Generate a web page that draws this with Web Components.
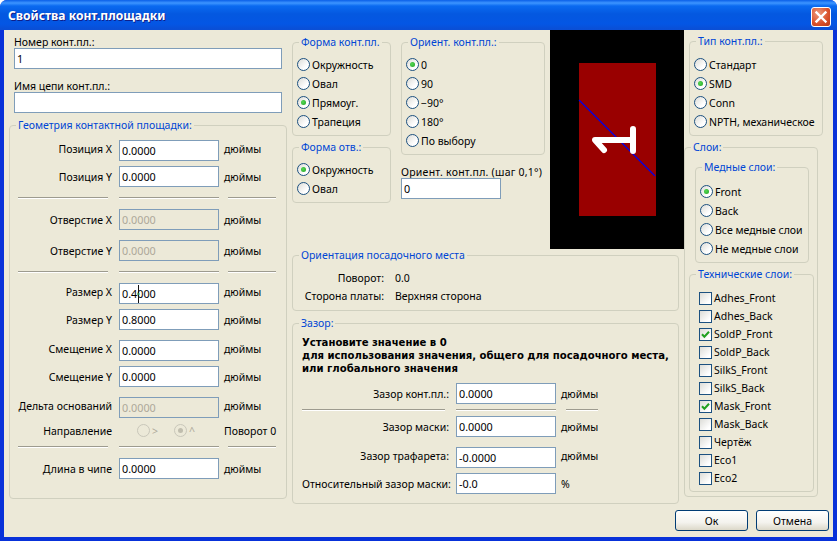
<!DOCTYPE html>
<html>
  <head>
    <title>Свойства конт.площадки</title>
    <style>
      html, body { margin: 0; padding: 0; background: #fff; }
    </style>
    <script>
      class WindowElement extends HTMLElement {
        static registerCustomElement() {
          WindowElement.template = document.createElement('template');
          WindowElement.template.innerHTML = `
            <style>
              :host {
                display: flex;
                flex-direction: column;
                width: 837px;
                height: 541px;
                box-sizing: border-box;
                font: 10.5px "Noto Sans", sans-serif;
                color: #000;
                background: #0831d9;
                border-radius: 7px 7px 0 0;
                overflow: hidden;
              }
              .bar {
                display: flex;
                align-items: center;
                justify-content: space-between;
                height: 30px;
                flex: none;
                padding: 0 6px 0 8px;
                box-sizing: border-box;
                background: linear-gradient(#0a5fe8 0, #3d95ff 3px, #0a6af0 6px, #0458e0 14px, #0456e4 24px, #0a4fd6 29px);
                color: #fff;
                font: bold 12.1px "Noto Sans", sans-serif;
                text-shadow: 1px 1px 0 #0f1f8a;
              }
              .close {
                width: 20px;
                height: 20px;
                margin-top: 4px;
                box-sizing: border-box;
                border: 1px solid #fff;
                border-radius: 3px;
                background: radial-gradient(circle at 35% 30%, #ec9a7c, #d9502a 60%, #b83a14);
              }
              .close svg { display: block; }
              .client {
                flex: 1;
                margin: 0 4px 4px;
                background: #ece9d8;
                min-height: 0;
              }
            </style>
            <div class="bar">
              <span class="title"></span>
              <div class="close">
                <svg width="18" height="18" viewBox="0 0 18 18"><path d="M4.5 4.5L13.5 13.5M13.5 4.5L4.5 13.5" stroke="#fff" stroke-width="2.4" stroke-linecap="square"/></svg>
              </div>
            </div>
            <div class="client"><slot></slot></div>
          `;
          window.customElements.define('x-window', WindowElement);
        }

        constructor() {
          super();
          const shadowRoot = this.attachShadow({ mode: 'open' });
          shadowRoot.appendChild(WindowElement.template.content.cloneNode(true));
        }

        connectedCallback() {
          this.shadowRoot.querySelector('.title').textContent = this.getAttribute('title-text');
        }
      }

      class GroupElement extends HTMLElement {
        static registerCustomElement() {
          GroupElement.template = document.createElement('template');
          GroupElement.template.innerHTML = `
            <style>
              :host {
                display: block;
                position: relative;
                box-sizing: border-box;
                border: 1px solid #d0d0bf;
                border-radius: 4px;
              }
              .legend {
                position: absolute;
                top: -7px;
                left: 6px;
                padding: 0 2px;
                line-height: 13px;
                white-space: nowrap;
                color: #0046d5;
                background: #ece9d8;
              }
            </style>
            <span class="legend"></span>
            <slot></slot>
          `;
          window.customElements.define('x-group', GroupElement);
        }

        constructor() {
          super();
          const shadowRoot = this.attachShadow({ mode: 'open' });
          shadowRoot.appendChild(GroupElement.template.content.cloneNode(true));
        }

        connectedCallback() {
          this.shadowRoot.querySelector('.legend').textContent = this.getAttribute('label');
        }
      }

      class RadioElement extends HTMLElement {
        static registerCustomElement() {
          RadioElement.template = document.createElement('template');
          RadioElement.template.innerHTML = `
            <style>
              :host {
                display: flex;
                align-items: center;
                height: 19px;
                white-space: nowrap;
              }
              .dot {
                flex: none;
                width: 13px;
                height: 13px;
                margin-right: 2px;
                box-sizing: border-box;
                border: 1px solid #1c5180;
                border-radius: 50%;
                background: linear-gradient(135deg, #dcdcd7, #fff 70%);
                display: flex;
                align-items: center;
                justify-content: center;
              }
              :host([checked]) .dot::after {
                content: '';
                width: 5px;
                height: 5px;
                border-radius: 50%;
                background: radial-gradient(circle at 40% 40%, #55d955, #21a121);
              }
              :host([disabled]) { color: #aca899; }
              :host([disabled]) .dot {
                border-color: #c9c7ba;
                background: #ece9d8;
              }
              :host([disabled][checked]) .dot::after { background: #c0bdae; }
            </style>
            <span class="dot"></span><slot></slot>
          `;
          window.customElements.define('x-radio', RadioElement);
        }

        constructor() {
          super();
          const shadowRoot = this.attachShadow({ mode: 'open' });
          shadowRoot.appendChild(RadioElement.template.content.cloneNode(true));
        }
      }

      class CheckElement extends HTMLElement {
        static registerCustomElement() {
          CheckElement.template = document.createElement('template');
          CheckElement.template.innerHTML = `
            <style>
              :host {
                display: flex;
                align-items: center;
                height: 18px;
                white-space: nowrap;
              }
              .box {
                flex: none;
                width: 13px;
                height: 13px;
                margin-right: 2px;
                box-sizing: border-box;
                border: 1px solid #1c5180;
                background: linear-gradient(135deg, #dcdcd7, #fff 80%);
              }
              svg { display: none; }
              :host([checked]) svg { display: block; }
            </style>
            <span class="box">
              <svg width="11" height="11" viewBox="0 0 11 11"><path d="M2 5.2L4.4 7.8L9 2.8" fill="none" stroke="#21a121" stroke-width="2"/></svg>
            </span><slot></slot>
          `;
          window.customElements.define('x-check', CheckElement);
        }

        constructor() {
          super();
          const shadowRoot = this.attachShadow({ mode: 'open' });
          shadowRoot.appendChild(CheckElement.template.content.cloneNode(true));
        }
      }

      class TextBoxElement extends HTMLElement {
        static registerCustomElement() {
          TextBoxElement.template = document.createElement('template');
          TextBoxElement.template.innerHTML = `
            <style>
              :host {
                display: flex;
                align-items: center;
                position: relative;
                height: 21px;
                width: 100px;
                box-sizing: border-box;
                padding: 0 2px;
                border: 1px solid #7f9db9;
                background: #fff;
                white-space: nowrap;
                font-size: 10.8px;
              }
              :host([disabled]) {
                background: #ece9d8;
                color: #aca899;
              }
              .caret {
                display: none;
                position: absolute;
                left: 17px;
                top: 1px;
              }
              :host([caret]) .caret { display: block; }
            </style>
            <slot></slot>
            <svg class="caret" width="3" height="18" viewBox="0 0 3 18"><path d="M1.5 0V18" stroke="#111" stroke-width="1"/><path d="M0 9H3" stroke="#3b7" stroke-width="1"/></svg>
          `;
          window.customElements.define('x-textbox', TextBoxElement);
        }

        constructor() {
          super();
          const shadowRoot = this.attachShadow({ mode: 'open' });
          shadowRoot.appendChild(TextBoxElement.template.content.cloneNode(true));
        }
      }

      // label, box, unit on one row; --label-width sets the first column
      class FieldElement extends HTMLElement {
        static registerCustomElement() {
          FieldElement.template = document.createElement('template');
          FieldElement.template.innerHTML = `
            <style>
              :host {
                display: grid;
                grid-template-columns: var(--label-width, 102px) 100px auto;
                column-gap: 7px;
                align-items: center;
                white-space: nowrap;
              }
              .label { text-align: right; }
              .unit { margin-left: -2px; }
              /* some rows of the dialog have their captions two pixels above the box centre */
              :host([raised]) .label, :host([raised]) .unit { margin-bottom: 4px; }
            </style>
            <span class="label"></span>
            <x-textbox></x-textbox>
            <span class="unit"></span>
          `;
          window.customElements.define('x-field', FieldElement);
        }

        constructor() {
          super();
          const shadowRoot = this.attachShadow({ mode: 'open' });
          shadowRoot.appendChild(FieldElement.template.content.cloneNode(true));
        }

        connectedCallback() {
          const box = this.shadowRoot.querySelector('x-textbox');
          this.shadowRoot.querySelector('.label').textContent = this.getAttribute('label');
          this.shadowRoot.querySelector('.unit').textContent = this.getAttribute('unit');
          box.textContent = this.getAttribute('value');
          if (this.hasAttribute('disabled')) box.setAttribute('disabled', '');
          if (this.hasAttribute('caret')) box.setAttribute('caret', '');
        }
      }

      class RuleElement extends HTMLElement {
        static registerCustomElement() {
          RuleElement.template = document.createElement('template');
          RuleElement.template.innerHTML = `
            <style>
              :host {
                display: grid;
                grid-template-columns: var(--a) 100px var(--c);
                column-gap: var(--g1) ;
                height: 2px;
              }
              i {
                display: block;
                height: 2px;
                box-sizing: border-box;
                border-top: 1px solid #9d9b8f;
                border-bottom: 1px solid #fff;
              }
              i:last-child { margin-left: var(--shift, 0); }
            </style>
            <i></i><i></i><i></i>
          `;
          window.customElements.define('x-rule', RuleElement);
        }

        constructor() {
          super();
          const shadowRoot = this.attachShadow({ mode: 'open' });
          shadowRoot.appendChild(RuleElement.template.content.cloneNode(true));
        }
      }

      class PadViewElement extends HTMLElement {
        static registerCustomElement() {
          PadViewElement.template = document.createElement('template');
          PadViewElement.template.innerHTML = `
            <style>
              :host { display: block; width: 134px; height: 219px; background: #000; }
              svg { display: block; }
            </style>
            <svg width="134" height="219" viewBox="0 0 134 219">
              <rect x="29" y="33" width="77" height="153" fill="#990000"/>
              <path d="M29 70L105 146" fill="none" stroke="#0000e8" stroke-width="1.3"/>
              <path d="M83 99V121M83 110H45L54 120" fill="none" stroke="#fff" stroke-width="6" stroke-linecap="round" stroke-linejoin="round"/>
            </svg>
          `;
          window.customElements.define('x-pad-view', PadViewElement);
        }

        constructor() {
          super();
          const shadowRoot = this.attachShadow({ mode: 'open' });
          shadowRoot.appendChild(PadViewElement.template.content.cloneNode(true));
        }
      }

      class ButtonElement extends HTMLElement {
        static registerCustomElement() {
          ButtonElement.template = document.createElement('template');
          ButtonElement.template.innerHTML = `
            <style>
              :host {
                display: flex;
                align-items: center;
                justify-content: center;
                width: 73px;
                height: 21px;
                box-sizing: border-box;
                border: 1px solid #003c74;
                border-radius: 3px;
                background: linear-gradient(#fff, #f4f3ee 60%, #dcd8c9);
              }
            </style>
            <slot></slot>
          `;
          window.customElements.define('x-button', ButtonElement);
        }

        constructor() {
          super();
          const shadowRoot = this.attachShadow({ mode: 'open' });
          shadowRoot.appendChild(ButtonElement.template.content.cloneNode(true));
        }
      }

      class PadDialogElement extends HTMLElement {
        static registerCustomElement() {
          PadDialogElement.template = document.createElement('template');
          PadDialogElement.template.innerHTML = `
            <style>
              :host { display: block; height: 100%; }
              .main { display: flex; height: 480px; }
              .left { width: 288px; box-sizing: border-box; padding: 6px 0 0 5px; }
              .cap { line-height: 12px; margin-left: 5px; white-space: nowrap; }
              .wide { width: 268px; margin-left: 5px; }
              .geom { width: 278px; height: 374px; margin-top: 12px; padding-top: 14px; }
              .g2 { margin-top: 2px; }
              .g5 { margin-top: 5px; }
              .g10 { margin-top: 10px; }
              .g11 { margin-top: 11px; }
              .geom x-rule { margin-left: 8px; --a: 90px; --c: 46px; --g1: 11px; --shift: -2px; }
              .dir {
                display: grid;
                grid-template-columns: 102px 100px auto;
                column-gap: 7px;
                align-items: center;
                height: 21px;
                white-space: nowrap;
              }
              .dir .right { text-align: right; }
              .dir .opts { display: grid; grid-template-columns: 37px 37px; padding-left: 18px; }
              .dir .unit { margin-left: -2px; }
              .mid { width: 392px; }
              .top { display: flex; height: 219px; }
              .shapes { width: 99px; padding-top: 12px; }
              .orient { width: 144px; margin-left: 10px; padding-top: 12px; }
              .view { margin-left: 5px; }
              .radios { padding: 12px 4px 4px; }
              .cap-mid { margin: 11px 0 0; line-height: 12px; white-space: nowrap; letter-spacing: .24px; }
              .foot { width: 387px; margin-top: 6px; padding: 13px 0 5px 9px; }
              .info { display: grid; grid-template-columns: 82px auto; column-gap: 11px; line-height: 18px; white-space: nowrap; }
              .info span:nth-child(odd) { text-align: right; }
              .clear { width: 387px; margin-top: 12px; padding: 12px 0 9px 9px; --label-width: 147px; }
              .clear x-rule { --a: 143px; --c: 31px; --g1: 11px; --shift: -1px; }
              .bold { font: bold 10.1px/13px "DejaVu Sans", sans-serif; margin-bottom: 8px; white-space: nowrap; }
              .right-col { width: 149px; }
              .type { width: 134px; margin: 11px 0 0 5px; padding: 13px 4px 4px; }
              .layers { width: 134px; margin-top: 11px; padding: 19px 0 4px; }
              .copper { width: 114px; margin-left: 10px; padding: 14px 4px 4px; }
              .tech { width: 125px; margin: 11px 0 0 4px; padding: 14px 4px 4px 9px; }
              .buttons { display: flex; justify-content: flex-end; gap: 8px; padding-right: 4px; }
            </style>
            <div class="main">
              <div class="left">
                <div class="cap">Номер конт.пл.:</div>
                <x-textbox class="wide">1</x-textbox>
                <div class="cap g11">Имя цепи конт.пл.:</div>
                <x-textbox class="wide"></x-textbox>
                <x-group class="geom" label="Геометрия контактной площадки:">
                  <x-field label="Позиция X" value="0.0000" unit="дюймы" raised></x-field>
                  <x-field class="g5" label="Позиция Y" value="0.0000" unit="дюймы"></x-field>
                  <x-rule class="g10"></x-rule>
                  <x-field class="g10" label="Отверстие X" value="0.0000" unit="дюймы" disabled></x-field>
                  <x-field class="g10" label="Отверстие Y" value="0.0000" unit="дюймы" disabled></x-field>
                  <x-rule class="g10"></x-rule>
                  <x-field class="g10" label="Размер X" value="0.4000" unit="дюймы" caret raised></x-field>
                  <x-field class="g5" label="Размер Y" value="0.8000" unit="дюймы"></x-field>
                  <x-field class="g10" label="Смещение X" value="0.0000" unit="дюймы" raised></x-field>
                  <x-field class="g5" label="Смещение Y" value="0.0000" unit="дюймы"></x-field>
                  <x-field class="g10" label="Дельта оснований" value="0.0000" unit="дюймы" disabled raised></x-field>
                  <div class="dir g2">
                    <span class="right">Направление</span>
                    <div class="opts">
                      <x-radio disabled>&gt;</x-radio>
                      <x-radio disabled checked>^</x-radio>
                    </div>
                    <span class="unit">Поворот 0</span>
                  </div>
                  <x-rule class="g5"></x-rule>
                  <x-field class="g10" label="Длина в чипе" value="0.0000" unit="дюймы"></x-field>
                </x-group>
              </div>
              <div class="mid">
                <div class="top">
                  <div class="shapes">
                    <x-group class="radios" label="Форма конт.пл.">
                      <x-radio>Окружность</x-radio>
                      <x-radio>Овал</x-radio>
                      <x-radio checked>Прямоуг.</x-radio>
                      <x-radio>Трапеция</x-radio>
                    </x-group>
                    <x-group class="radios g11" label="Форма отв.:">
                      <x-radio checked>Окружность</x-radio>
                      <x-radio>Овал</x-radio>
                    </x-group>
                  </div>
                  <div class="orient">
                    <x-group class="radios" label="Ориент. конт.пл.:">
                      <x-radio checked>0</x-radio>
                      <x-radio>90</x-radio>
                      <x-radio>−90°</x-radio>
                      <x-radio>180°</x-radio>
                      <x-radio>По выбору</x-radio>
                    </x-group>
                    <div class="cap-mid">Ориент. конт.пл. (шаг 0,1°)</div>
                    <x-textbox>0</x-textbox>
                  </div>
                  <x-pad-view class="view"></x-pad-view>
                </div>
                <x-group class="foot" label="Ориентация посадочного места">
                  <div class="info">
                    <span>Поворот:</span><span>0.0</span>
                    <span>Сторона платы:</span><span>Верхняя сторона</span>
                  </div>
                </x-group>
                <x-group class="clear" label="Зазор:">
                  <div class="bold">Установите значение в 0<br>для использования значения, общего для посадочного места,<br>или глобального значения</div>
                  <x-field label="Зазор конт.пл.:" value="0.0000" unit="дюймы"></x-field>
                  <x-rule class="g5"></x-rule>
                  <x-field class="g5" label="Зазор маски:" value="0.0000" unit="дюймы"></x-field>
                  <x-field class="g10" label="Зазор трафарета:" value="-0.0000" unit="дюймы" raised></x-field>
                  <x-field class="g5" label="Относительный зазор маски:" value="-0.0" unit="%"></x-field>
                </x-group>
              </div>
              <div class="right-col">
                <x-group class="type" label="Тип конт.пл.:">
                  <x-radio>Стандарт</x-radio>
                  <x-radio checked>SMD</x-radio>
                  <x-radio>Conn</x-radio>
                  <x-radio>NPTH, механическое</x-radio>
                </x-group>
                <x-group class="layers" label="Слои:">
                  <x-group class="copper" label="Медные слои:">
                    <x-radio checked>Front</x-radio>
                    <x-radio>Back</x-radio>
                    <x-radio>Все медные слои</x-radio>
                    <x-radio>Не медные слои</x-radio>
                  </x-group>
                  <x-group class="tech" label="Технические слои:">
                    <x-check>Adhes_Front</x-check>
                    <x-check>Adhes_Back</x-check>
                    <x-check checked>SoldP_Front</x-check>
                    <x-check>SoldP_Back</x-check>
                    <x-check>SilkS_Front</x-check>
                    <x-check>SilkS_Back</x-check>
                    <x-check checked>Mask_Front</x-check>
                    <x-check>Mask_Back</x-check>
                    <x-check>Чертёж</x-check>
                    <x-check>Eco1</x-check>
                    <x-check>Eco2</x-check>
                  </x-group>
                </x-group>
              </div>
            </div>
            <div class="buttons">
              <x-button>Ок</x-button>
              <x-button>Отмена</x-button>
            </div>
          `;
          window.customElements.define('x-pad-dialog', PadDialogElement);
        }

        constructor() {
          super();
          const shadowRoot = this.attachShadow({ mode: 'open' });
          shadowRoot.appendChild(PadDialogElement.template.content.cloneNode(true));
        }
      }

      [WindowElement, GroupElement, RadioElement, CheckElement, TextBoxElement, FieldElement,
        RuleElement, PadViewElement, ButtonElement, PadDialogElement].forEach(x => { x.registerCustomElement() });
    </script>
  </head>
  <body>
    <x-window title-text="Свойства конт.площадки">
      <x-pad-dialog></x-pad-dialog>
    </x-window>
  </body>
</html>
